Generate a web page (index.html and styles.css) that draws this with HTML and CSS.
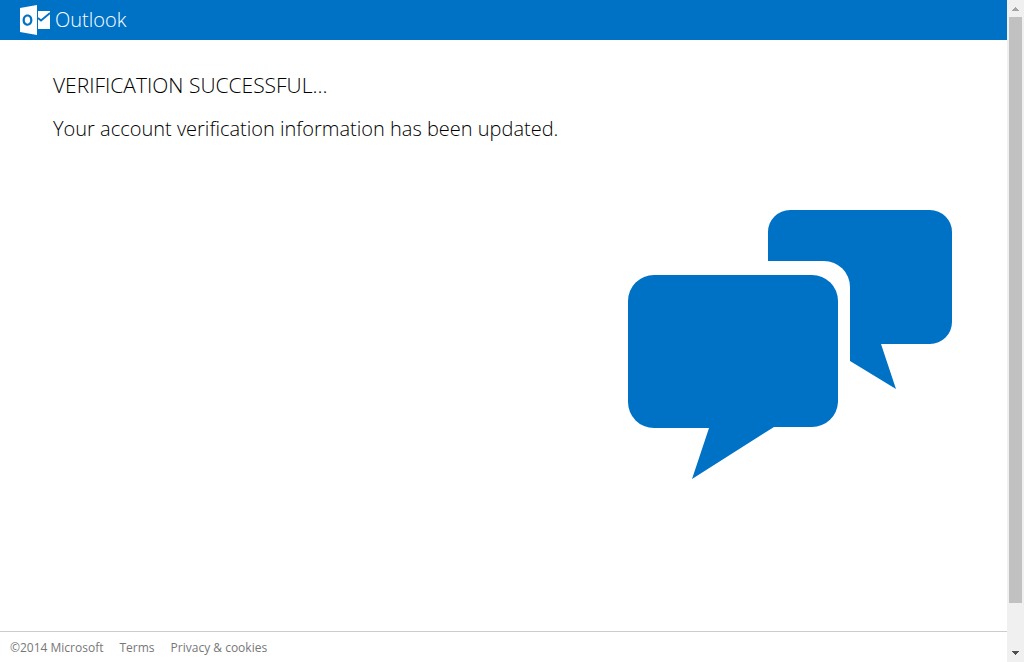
FILE: index.html
```html
<!DOCTYPE html>
<html lang="en">
<head>
<meta charset="utf-8">
<title>Outlook</title>
<link rel="stylesheet" href="styles.css">
</head>
<body>
<div class="page">
  <header class="header">
    <svg class="logo" viewBox="0 0 30 30" aria-hidden="true">
      <path fill="#fff" fill-rule="evenodd" d="M0 3 17 0V30L0 27ZM7.500 9.500C4.500 9.500 2.600 12 2.600 15.200S4.500 20.700 7.500 20.700 12.400 18.300 12.400 15.100 10.500 9.500 7.500 9.500ZM7.500 11.500C9.300 11.500 10.200 13 10.200 15.100S9.300 18.700 7.500 18.700 4.800 17.200 4.800 15.100 5.700 11.500 7.500 11.500Z"/>
      <path fill="#fff" d="M18 6H30V24H18Z"/>
      <path fill="none" stroke="#0072c6" stroke-width="1.800" d="M18 13 21 15.500 30 8"/>
    </svg>
    <span class="brand">Outlook</span>
  </header>
  <main class="content">
    <h1 class="title">VERIFICATION SUCCESSFUL...</h1>
    <p class="message">Your account verification information has been updated.</p>
    <svg class="bubbles" viewBox="0 0 324 270" aria-hidden="true">
      <path d="M26 65H184A26 26 0 0 1 210 91V192A26 26 0 0 1 184 217H146L64 269 81 218H26A26 26 0 0 1 0 192V91A26 26 0 0 1 26 65Z"/>
      <path d="M140 51V22A22 22 0 0 1 162 0H302A22 22 0 0 1 324 22V112A22 22 0 0 1 302 134H253L268 179 222 151V77A26 26 0 0 0 196 51Z"/>
    </svg>
  </main>
  <footer class="footer">
    <span>©2014 Microsoft</span>
    <a href="#">Terms</a>
    <a href="#">Privacy &amp; cookies</a>
  </footer>
</div>
<div class="scrollbar" aria-hidden="true">
  <svg class="arrow" viewBox="0 0 17 17"><path fill="#a3a3a3" d="M8 7H9V8H10V9H11V10H12V11H5V10H6V9H7V8H8Z"/></svg>
  <div class="track"><div class="thumb"></div></div>
  <svg class="arrow" viewBox="0 0 17 17"><path fill="#505050" d="M5 6H12V7H11V8H10V9H9V10H8V9H7V8H6V7H5Z"/></svg>
</div>
</body>
</html>
```
FILE: styles.css
```css
* {
  box-sizing: border-box;
}

body {
  margin: 0;
  min-height: 100vh;
  display: flex;
  background: #fff;
  color: #000;
  font-family: "Open Sans", "Noto Sans", sans-serif;
}

.page {
  flex: 1;
  display: flex;
  flex-direction: column;
}

.header {
  display: flex;
  align-items: center;
  gap: 5px;
  height: 40px;
  padding-left: 20px;
  background: #0072c6;
  color: #fff;
}

.logo {
  width: 30px;
  height: 30px;
}

.brand {
  font-size: 20px;
  font-weight: 300;
  line-height: 30px;
}

.content {
  flex: 1;
  display: flex;
  flex-direction: column;
  padding: 30px 55px 30px 53px;
}

.title,
.message {
  margin: 0 0 14px;
  font-weight: 300;
  line-height: 30px;
}

.title {
  font-size: 21px;
}

.message {
  font-size: 20px;
}

.bubbles {
  width: 324px;
  height: 270px;
  margin-top: 52px;
  align-self: flex-end;
  fill: #0072c6;
}

.footer {
  display: flex;
  gap: 16px;
  padding: 8px 10px 6px;
  border-top: 1px solid #ccc;
  color: #777;
  font-size: 12px;
  line-height: 16px;
}

.footer a {
  color: inherit;
  text-decoration: none;
}

.scrollbar {
  display: flex;
  flex-direction: column;
  width: 17px;
  background: #f0f0f0;
}

.arrow {
  width: 17px;
  height: 17px;
}

.track {
  flex: 1;
  padding: 0 2px;
}

.thumb {
  height: 93.3%;
  background: #c1c1c1;
}
```
